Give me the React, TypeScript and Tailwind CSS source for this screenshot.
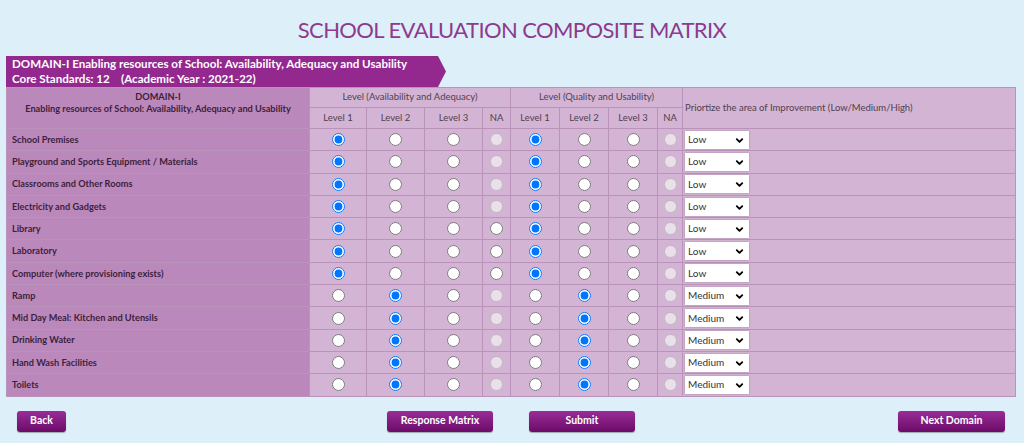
import { ChevronDown } from 'lucide-react';

type Row = {
  label: string;
  level: 1 | 2;
  naOpen: boolean;
  priority: 'Low' | 'Medium';
};

const rows: Row[] = [
  { label: 'School Premises', level: 1, naOpen: false, priority: 'Low' },
  { label: 'Playground and Sports Equipment / Materials', level: 1, naOpen: false, priority: 'Low' },
  { label: 'Classrooms and Other Rooms', level: 1, naOpen: false, priority: 'Low' },
  { label: 'Electricity and Gadgets', level: 1, naOpen: false, priority: 'Low' },
  { label: 'Library', level: 1, naOpen: true, priority: 'Low' },
  { label: 'Laboratory', level: 1, naOpen: true, priority: 'Low' },
  { label: 'Computer (where provisioning exists)', level: 1, naOpen: true, priority: 'Low' },
  { label: 'Ramp', level: 2, naOpen: false, priority: 'Medium' },
  { label: 'Mid Day Meal: Kitchen and Utensils', level: 2, naOpen: false, priority: 'Medium' },
  { label: 'Drinking Water', level: 2, naOpen: false, priority: 'Medium' },
  { label: 'Hand Wash Facilities', level: 2, naOpen: false, priority: 'Medium' },
  { label: 'Toilets', level: 2, naOpen: false, priority: 'Medium' },
];

const cell = 'border border-[#b993b9] text-center align-middle';

function Radio({ name, checked, disabled }: { name: string; checked?: boolean; disabled?: boolean }) {
  return (
    <input
      type="radio"
      name={name}
      defaultChecked={checked}
      disabled={disabled}
      className="m-0 block mx-auto h-[13px] w-[13px] align-middle"
    />
  );
}

function PrioritySelect({ value }: { value: string }) {
  return (
    <div className="relative ml-[2px] h-[18px] w-[64px] bg-white shadow-[0_0_2px_rgba(0,0,0,0.25)]">
      <select
        defaultValue={value}
        className="h-full w-full appearance-none bg-transparent pl-[3px] text-[10px] text-[#333] outline-none"
      >
        <option>Low</option>
        <option>Medium</option>
        <option>High</option>
      </select>
      <ChevronDown
        size={11}
        strokeWidth={4}
        className="pointer-events-none absolute right-[4px] top-[4px] text-black"
      />
    </div>
  );
}

function NavButton({ children, className }: { children: string; className: string }) {
  return (
    <button
      type="button"
      className={`h-[21px] rounded-[3px] bg-gradient-to-b from-[#9a2c98] to-[#6b0a69] text-[10.5px] font-bold text-white shadow-[0_1px_1px_rgba(0,0,0,0.3)] ${className}`}
    >
      {children}
    </button>
  );
}

export default function App() {
  return (
    <div className="min-h-[443px] bg-[#ddf0fa] font-['Lato','Open_Sans',sans-serif]">
      <h1 className="pt-[15px] text-center text-[22px] leading-[30px] tracking-[-0.6px] text-[#8e3a8e]">
        SCHOOL EVALUATION COMPOSITE MATRIX
      </h1>

      <div className="mt-[11px] px-[6px] pr-[8px]">
        <div className="h-[31px] w-[440px] bg-[#93288f] pl-[6px] pt-[1px] text-[11.6px] font-bold leading-[14.5px] text-white [clip-path:polygon(0_0,calc(100%-8px)_0,100%_50%,calc(100%-8px)_100%,0_100%)]">
          <div>DOMAIN-I Enabling resources of School: Availability, Adequacy and Usability</div>
          <div className="whitespace-pre">Core Standards: 12    (Academic Year : 2021-22)</div>
        </div>

        <table className="w-full table-fixed border-collapse bg-[#d4b4d4] text-[9.5px] text-[#4f404f]">
          <colgroup>
            <col className="w-[303px]" />
            <col className="w-[57px]" />
            <col className="w-[58px]" />
            <col className="w-[58px]" />
            <col className="w-[28px]" />
            <col className="w-[49px]" />
            <col className="w-[49px]" />
            <col className="w-[49px]" />
            <col className="w-[25px]" />
            <col />
          </colgroup>
          <thead>
            <tr className="h-[20px]">
              <th
                rowSpan={2}
                className={`${cell} bg-[#bb88bb] pb-[10px] text-[9.2px] font-bold leading-[12px] text-[#3b1f3b]`}
              >
                DOMAIN-I
                <br />
                Enabling resources of School: Availability, Adequacy and Usability
              </th>
              <th colSpan={4} className={`${cell} font-normal`}>
                Level (Availability and Adequacy)
              </th>
              <th colSpan={4} className={`${cell} font-normal`}>
                Level (Quality and Usability)
              </th>
              <th rowSpan={2} className={`${cell} pl-[2px] text-left font-normal`}>
                Priortize the area of Improvement (Low/Medium/High)
              </th>
            </tr>
            <tr className="h-[21px]">
              {['Level 1', 'Level 2', 'Level 3', 'NA', 'Level 1', 'Level 2', 'Level 3', 'NA'].map((h, i) => (
                <th key={i} className={`${cell} font-normal`}>
                  {h}
                </th>
              ))}
            </tr>
          </thead>
          <tbody>
            {rows.map((r, i) => (
              <tr key={r.label} className="h-[22.3px]">
                <td className={`${cell} bg-[#bb88bb] pl-[5px] text-left text-[9.2px] font-bold text-[#3b1f3b]`}>
                  {r.label}
                </td>
                <td className={cell}>
                  <Radio name={`a${i}`} checked={r.level === 1} />
                </td>
                <td className={cell}>
                  <Radio name={`a${i}`} checked={r.level === 2} />
                </td>
                <td className={cell}>
                  <Radio name={`a${i}`} />
                </td>
                <td className={cell}>
                  <Radio name={`a${i}`} disabled={!r.naOpen} />
                </td>
                <td className={cell}>
                  <Radio name={`q${i}`} checked={r.level === 1} />
                </td>
                <td className={cell}>
                  <Radio name={`q${i}`} checked={r.level === 2} />
                </td>
                <td className={cell}>
                  <Radio name={`q${i}`} />
                </td>
                <td className={cell}>
                  <Radio name={`q${i}`} disabled />
                </td>
                <td className={`${cell} text-left`}>
                  <PrioritySelect value={r.priority} />
                </td>
              </tr>
            ))}
          </tbody>
        </table>
      </div>

      <div className="mt-[14px] flex items-start pl-[17px] pr-[19px]">
        <NavButton className="w-[49px]">Back</NavButton>
        <NavButton className="ml-[321px] w-[106px]">Response Matrix</NavButton>
        <NavButton className="ml-[36px] w-[106px]">Submit</NavButton>
        <NavButton className="ml-auto w-[107px]">Next Domain</NavButton>
      </div>
    </div>
  );
}
